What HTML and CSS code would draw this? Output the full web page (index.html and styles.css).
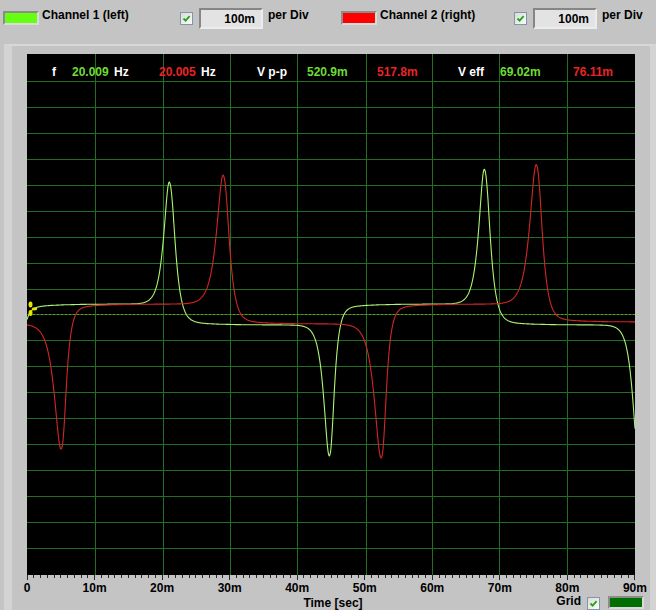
FILE: index.html
```html
<!DOCTYPE html>
<html lang="en">
<head>
    <meta charset="UTF-8">
    <title>Scope</title>
    <link rel="stylesheet" href="styles.css">
</head>
<body>

    <header class="toolbar">
        <div class="channel">
            <span class="swatch swatch--lime"></span>
            <span class="channel__name">Channel 1 (left)</span>
        </div>
        <div class="scale">
            <span class="check"><svg viewBox="0 0 11 11" width="11" height="11"><path d="M2.5 5.5 4.6 7.6 8.6 3.2"/></svg></span>
            <span class="field">100m</span>
            <span class="scale__unit">per Div</span>
        </div>
        <div class="channel">
            <span class="swatch swatch--red"></span>
            <span class="channel__name">Channel 2 (right)</span>
        </div>
        <div class="scale">
            <span class="check"><svg viewBox="0 0 11 11" width="11" height="11"><path d="M2.5 5.5 4.6 7.6 8.6 3.2"/></svg></span>
            <span class="field">100m</span>
            <span class="scale__unit">per Div</span>
        </div>
    </header>

    <main class="panel">
        <div class="scope">
            <svg class="scope__screen" viewBox="27 54 608 521" width="608" height="521">
                <rect x="27" y="54" width="608" height="521" fill="#000"/>
                <path class="scope__grid" d="M95.5 54V575M163.5 54V575M230.5 54V575M297.5 54V575M366.5 54V575M432.5 54V575M499.5 54V575M567.5 54V575
                    M27 81.5H635M27 107.5H635M27 133.5H635M27 159.5H635M27 185.5H635M27 211.5H635M27 237.5H635M27 263.5H635M27 289.5H635
                    M27 314.5H635M27 340.5H635M27 366.5H635M27 392.5H635M27 418.5H635M27 444.5H635M27 470.5H635M27 496.5H635M27 522.5H635M27 548.5H635"/>
                <path class="scope__zero" d="M33 314.5H635"/>
                <path id="trace-left" class="trace trace--left" d=""/>
                <path id="trace-right" class="trace trace--right" d=""/>
                <g class="scope__cursor">
                    <ellipse cx="30.5" cy="304.5" rx="2" ry="3"/>
                    <ellipse cx="30.5" cy="313" rx="2" ry="3"/>
                    <ellipse cx="34.5" cy="308.8" rx="2.8" ry="1.6"/>
                </g>
            </svg>

            <div class="readout">
                <span>f</span>
                <span class="val-left">20.009</span>
                <span>Hz</span>
                <span class="val-right">20.005</span>
                <span>Hz</span>
                <span>V p-p</span>
                <span class="val-left">520.9m</span>
                <span class="val-right">517.8m</span>
                <span>V eff</span>
                <span class="val-left">69.02m</span>
                <span class="val-right">76.11m</span>
            </div>
        </div>

        <svg id="ticks" class="ticks" viewBox="27 575 608 6" width="608" height="6"></svg>

        <div class="axis">
            <span>0</span>
            <span>10m</span>
            <span>20m</span>
            <span>30m</span>
            <span>40m</span>
            <span>50m</span>
            <span>60m</span>
            <span>70m</span>
            <span>80m</span>
            <span>90m</span>
        </div>

        <div class="footer">
            <span class="footer__title">Time [sec]</span>
            <div class="grid-toggle">
                <span class="grid-toggle__label">Grid</span>
                <span class="check check--low"><svg viewBox="0 0 11 11" width="11" height="11"><path d="M2.5 5.5 4.6 7.6 8.6 3.2"/></svg></span>
                <span class="swatch swatch--dark"></span>
            </div>
        </div>
    </main>

    <script src="script.js"></script>
</body>
</html>
```

FILE: styles.css
```css
*,
*::before,
*::after {
    box-sizing: border-box;
}

body {
    margin: 0;
    width: 656px;
    height: 610px;
    overflow: hidden;
    background-color: #c4c4c4;
    color: #000;
    font: bold 12px/14px "Liberation Sans", Arial, sans-serif;
}

/* top bar */
.toolbar {
    display: grid;
    grid-template-columns: 177px 161px 173px 1fr;
    height: 44px;
    padding: 0 0 8px 3px;
}

.channel,
.scale {
    display: flex;
    align-items: center;
}

.channel__name,
.scale__unit {
    align-self: flex-start;
    margin-top: 8px;
    white-space: nowrap;
}

.channel__name {
    margin-left: 3px;
}

.scale__unit {
    margin-left: 5px;
}

.swatch {
    display: block;
    width: 36px;
    height: 14px;
    border: 2px solid;
    border-color: #8c8c8c #dadada #dadada #8c8c8c;
}

.swatch--lime {
    background-color: #66ff0f;
}

.swatch--red {
    background-color: #ff0000;
}

.swatch--dark {
    background-color: #006f00;
    height: 13px;
}

.check {
    display: flex;
    align-items: center;
    justify-content: center;
    width: 13px;
    height: 13px;
    border: 1px solid #8096b0;
    background: linear-gradient(135deg, #dcdcd4, #fbfbf8);
}

.check path {
    fill: none;
    stroke: #22a322;
    stroke-width: 1.8;
}

.field {
    display: block;
    width: 64px;
    height: 21px;
    margin-left: 6px;
    padding: 1px 6px 0 0;
    border: 2px solid;
    border-color: #868686 #ececec #ececec #868686;
    background-color: #e3e3e3;
    line-height: 16px;
    text-align: right;
}

/* scope panel */
.panel {
    height: 566px;
    margin-left: 4px;
    padding: 8px 15px 0;
    border-top: 2px solid #d8d8d8;
    border-left: 8px solid #d3d3d3;
    border-right: 6px solid #d3d3d3;
}

.scope {
    position: relative;
    width: 608px;
    height: 521px;
}

.scope__screen {
    display: block;
}

.scope__grid {
    fill: none;
    stroke: #216f21;
    stroke-width: 1;
}

.scope__zero {
    fill: none;
    stroke: #8aa400;
    stroke-width: 1;
    stroke-dasharray: 2 2;
    opacity: 0.7;
}

.trace {
    fill: none;
    stroke-width: 1.1;
    stroke-linejoin: round;
}

.trace--left {
    stroke: #adf474;
}

.trace--right {
    stroke: #d22626;
}

.scope__cursor {
    fill: #e6e600;
}

.readout {
    position: absolute;
    top: 11px;
    left: 0;
    right: 0;
    display: grid;
    grid-template-columns: 20px 42px 45px 42px 56px 50px 70px 81px 42px 73px auto;
    padding-left: 25px;
    color: #fff;
    white-space: nowrap;
}

.readout .val-left {
    color: #6ddc34;
}

.readout .val-right {
    color: #ea2424;
}

.ticks {
    display: block;
}

.ticks path {
    fill: none;
    stroke: #2a2a2a;
    stroke-width: 1;
}

.axis {
    display: flex;
    justify-content: space-between;
    width: 608px;
    height: 13px;
}

.axis span {
    display: flex;
    justify-content: center;
    width: 0;
    white-space: nowrap;
}

.footer {
    display: grid;
    grid-template-columns: 1fr auto 1fr;
    margin: 0 -15px;
    padding-left: 4px;
}

.footer__title {
    grid-column: 2;
    margin-top: 2px;
    white-space: nowrap;
}

.grid-toggle {
    display: flex;
    align-items: flex-start;
    justify-self: end;
    margin-right: 6px;
}

.grid-toggle .check {
    margin: 3px 0 0 6px;
}

.grid-toggle .swatch {
    margin: 2px 0 0 8px;
}
```

FILE: script.js
```js
// waveform model: level steps plus a sharp spike at every edge
function sech(v) {
    return 2 / (Math.exp(v) + Math.exp(-v));
}

function buildTrace(start, events) {
    var d = '';
    for (var x = 27; x <= 635; x += 0.5) {
        var level = start;
        var prev = start;
        var y = 0;
        events.forEach(function (e) {
            var s = 0.5 + 0.5 * Math.tanh((x - e.x) / 2.5);
            level += (e.to - prev) * s;
            prev = e.to;
            var w = x < e.x ? e.wl : e.wr;
            y += e.amp * sech((x - e.x) / w);
            if (x > e.x) {
                y += Math.sign(e.amp) * 6 * Math.exp(-(x - e.x) / 25) * Math.min(1, (x - e.x) / 3);
            }
        });
        d += (d ? 'L' : 'M') + x.toFixed(1) + ' ' + (level + y).toFixed(1);
    }
    return d;
}

document.getElementById('trace-left').setAttribute('d', buildTrace(325, [
    { x: 15, to: 304, amp: 140, wl: 5, wr: 3.8 },
    { x: 170, to: 325, amp: -131, wl: 5, wr: 4.6 },
    { x: 330, to: 304, amp: 140, wl: 5, wr: 3.8 },
    { x: 485, to: 325, amp: -144, wl: 5, wr: 4.6 },
    { x: 639, to: 304, amp: 140, wl: 5, wr: 3.8 }
]));

document.getElementById('trace-right').setAttribute('d', buildTrace(324, [
    { x: 62, to: 304, amp: 133, wl: 6.2, wr: 3.8 },
    { x: 224, to: 324, amp: -137, wl: 6, wr: 4.6 },
    { x: 382, to: 304, amp: 142, wl: 6.2, wr: 3.8 },
    { x: 537, to: 322, amp: -147, wl: 6, wr: 4.6 }
]));

// time axis ticks, 1m minor / 10m major
var ticks = '';
for (var i = 0; i <= 90; i++) {
    var tx = Math.floor(27 + i * 608 / 90) + 0.5;
    if (i === 90) tx = 634.5;
    ticks += 'M' + tx + ' 575V' + (i % 10 === 0 ? 580 : 578);
}
document.getElementById('ticks').innerHTML = '<path d="' + ticks + '"/>';
```
